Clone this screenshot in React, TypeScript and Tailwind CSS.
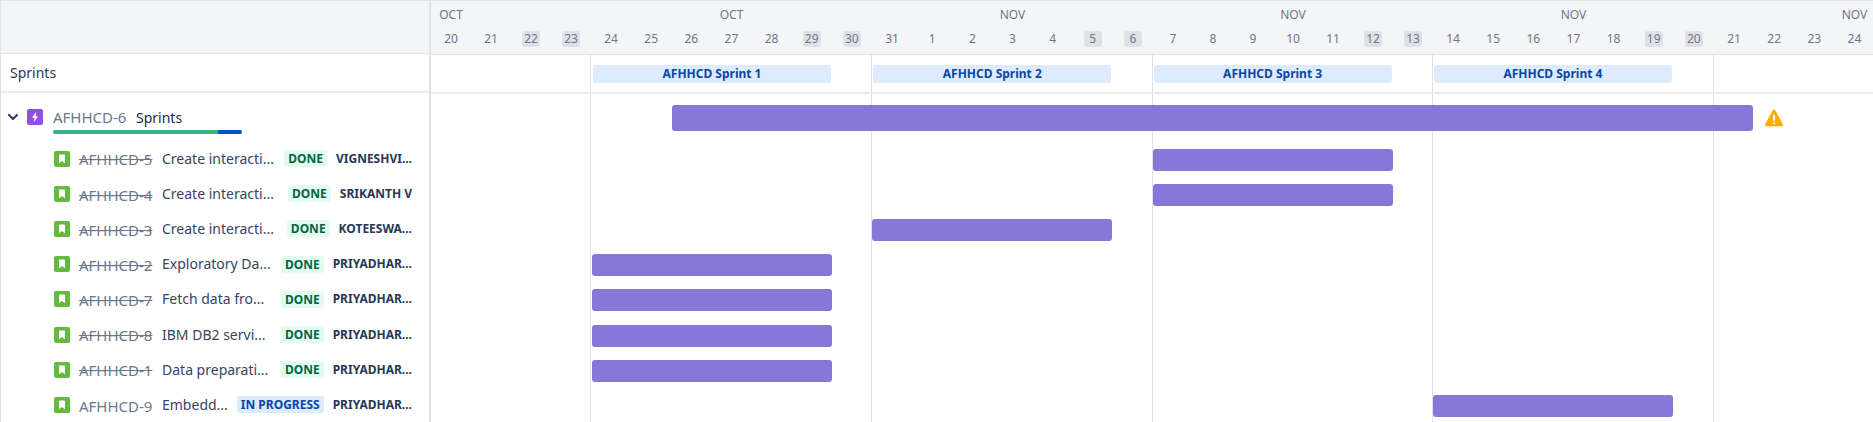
import React from 'react';

const weeks = [
  { month: 'OCT', w: 'w-[160px]', label: 'w-[40px]', days: [['20'], ['21'], ['22', 1], ['23', 1]] },
  { month: 'OCT', w: 'w-[281px]', label: 'w-full', days: [['24'], ['25'], ['26'], ['27'], ['28'], ['29', 1], ['30', 1]] },
  { month: 'NOV', w: 'w-[281px]', label: 'w-full', days: [['31'], ['1'], ['2'], ['3'], ['4'], ['5', 1], ['6', 1]] },
  { month: 'NOV', w: 'w-[280px]', label: 'w-full', days: [['7'], ['8'], ['9'], ['10'], ['11'], ['12', 1], ['13', 1]] },
  { month: 'NOV', w: 'w-[281px]', label: 'w-full', days: [['14'], ['15'], ['16'], ['17'], ['18'], ['19', 1], ['20', 1]] },
  { month: 'NOV', w: 'w-[281px]', label: 'w-full', days: [['21'], ['22'], ['23'], ['24']] },
] as const;

const sprints = [
  { name: 'AFHHCD Sprint 1', ml: 'ml-[162px]' },
  { name: 'AFHHCD Sprint 2', ml: 'ml-[42.3px]' },
  { name: 'AFHHCD Sprint 3', ml: 'ml-[42.3px]' },
  { name: 'AFHHCD Sprint 4', ml: 'ml-[42.3px]' },
];

const tasks = [
  { id: 'AFHHCD-5', title: 'Create interacti...', status: 'DONE', who: 'VIGNESHVI...', bar: 'ml-[722px]', done: true },
  { id: 'AFHHCD-4', title: 'Create interacti...', status: 'DONE', who: 'SRIKANTH V', bar: 'ml-[722px]', done: true },
  { id: 'AFHHCD-3', title: 'Create interacti...', status: 'DONE', who: 'KOTEESWA...', bar: 'ml-[441px]', done: true },
  { id: 'AFHHCD-2', title: 'Exploratory Da...', status: 'DONE', who: 'PRIYADHAR...', bar: 'ml-[161px]', done: true },
  { id: 'AFHHCD-7', title: 'Fetch data fro...', status: 'DONE', who: 'PRIYADHAR...', bar: 'ml-[161px]', done: true },
  { id: 'AFHHCD-8', title: 'IBM DB2 servi...', status: 'DONE', who: 'PRIYADHAR...', bar: 'ml-[161px]', done: true },
  { id: 'AFHHCD-1', title: 'Data preparati...', status: 'DONE', who: 'PRIYADHAR...', bar: 'ml-[161px]', done: true },
  { id: 'AFHHCD-9', title: 'Embedd...', status: 'IN PROGRESS', who: 'PRIYADHAR...', bar: 'ml-[1002px]', done: false },
];

const lines = ['left-[159px]', 'left-[440px]', 'left-[721px]', 'left-[1001px]', 'left-[1282px]'];

function StoryIcon() {
  return (
    <svg width="16" height="16" viewBox="0 0 16 16" className="shrink-0">
      <rect width="16" height="16" rx="2" fill="#63ba3c" />
      <path d="M5 4.2C5 3.8 5.3 3.5 5.7 3.5h4.6c.4 0 .7.3.7.7v8L8 10l-3 2.2z" fill="#fff" />
    </svg>
  );
}

function EpicIcon() {
  return (
    <svg width="16" height="16" viewBox="0 0 16 16" className="shrink-0">
      <rect width="16" height="16" rx="2" fill="#904ee2" />
      <path d="M8.9 3.2 5.2 8.4c-.1.2 0 .4.2.4h2.2l-.6 3.900c0 .2.2.3.3.1l3.600-5.200c.1-.2 0-.4-.2-.4H8.500l.7-3.900c0-.2-.2-.3-.3-.1z" fill="#fff" />
    </svg>
  );
}

const App: React.FC = () => {
  return (
    <div className="h-[422px] w-[1873px] overflow-hidden bg-white font-['Noto_Sans',sans-serif] text-[#253858]">
      <div className="flex h-full border-l border-t border-[#dfe1e6]">
        {/* left pane */}
        <div className="w-[428px] shrink-0 border-r-2 border-[#dfe1e6] box-content">
          <div className="h-[53px] border-b border-[#dfe1e6] bg-[#f4f5f7]" />
          <div className="flex h-[39px] items-center border-b-2 border-[#ebecf0] pl-[9px] text-[14px]">Sprints</div>
          <div className="h-[48px]">
            <div className="flex h-[24px] items-center pt-[12px] box-content">
              <svg width="24" height="24" viewBox="0 0 24 24" className="shrink-0 text-[#344563]">
                <path d="M8 10l4 4 4-4" fill="none" stroke="currentColor" strokeWidth="2.200" strokeLinecap="round" strokeLinejoin="round" />
              </svg>
              <span className="ml-[2px]"><EpicIcon /></span>
              <span className="ml-[10px] mt-[1px] w-[74px] whitespace-nowrap text-[15px] text-[#6b778c]">AFHHCD-6</span>
              <span className="ml-[9px] text-[14px] text-[#172b4d]">Sprints</span>
            </div>
            <div className="ml-[52px] mt-[1px] flex h-[4px] w-[189px] overflow-hidden rounded-full">
              <div className="w-[165px] bg-[#36b37e]" />
              <div className="flex-1 bg-[#0052cc]" />
            </div>
          </div>
          {tasks.map(t => (
            <div key={t.id} className="flex h-[35.2px] items-center pl-[53px] pr-[17px] text-[14px]">
              <StoryIcon />
              <span className={`ml-[9px] mt-[2px] w-[75px] shrink-0 whitespace-nowrap text-[15px] text-[#6b778c] ${t.done ? 'line-through' : ''}`}>{t.id}</span>
              <span className="mb-[1px] ml-[8px] min-w-0 flex-1 truncate text-[#344563]">{t.title}</span>
              <span className={`shrink-0 rounded-[3px] px-[4px] text-[12px] font-bold leading-[17px] ${t.done ? 'bg-[#e3fcef] text-[#006644]' : 'bg-[#deebff] text-[#0747a6]'}`}>{t.status}</span>
              <span className="ml-[9px] shrink-0 whitespace-nowrap text-[12px] font-bold text-[#253858]">{t.who}</span>
            </div>
          ))}
        </div>

        {/* timeline */}
        <div className="relative min-w-0 flex-1 overflow-hidden">
          {lines.map(l => (
            <div key={l} className={`absolute bottom-0 top-0 w-px bg-[#dfe1e6] ${l}`} />
          ))}
          <div className="relative flex h-[53px] border-b border-[#dfe1e6] bg-[#f4f5f7] text-[12px] text-[#6b778c] box-content">
            {weeks.map((wk, i) => (
              <div key={i} className={`shrink-0 pt-[6px] ${wk.w}`}>
                <div className={`text-center leading-[16px] ${wk.label}`}>{wk.month}</div>
                <div className="mt-[8px] flex">
                  {wk.days.map(([d, off]) => (
                    <div key={d} className="flex w-[40.14px] justify-center">
                      <span className={`flex h-[16px] w-[18px] items-center justify-center rounded-[3px] ${off ? 'bg-[#dfe1e6]' : ''}`}>{d}</span>
                    </div>
                  ))}
                </div>
              </div>
            ))}
          </div>
          <div className="relative flex h-[39px] items-center border-b-2 border-[#ebecf0]">
            {sprints.map(s => (
              <div key={s.name} className={`flex h-[18px] w-[238px] shrink-0 items-center justify-center rounded-[3px] bg-[#deebff] text-[12px] font-bold text-[#0747a6] ${s.ml}`}>{s.name}</div>
            ))}
          </div>
          <div className="relative flex h-[48px] items-start pt-[11px]">
            <div className="ml-[241px] h-[26px] w-[1081px] rounded-[3px] bg-[#8777d9]" />
            <svg width="20" height="20" viewBox="0 0 20 20" className="ml-[11px] mt-[3px] shrink-0">
              <path d="M8.6 2.400 1.200 16.200c-.5 1 .2 2.100 1.300 2.100h15c1.100 0 1.800-1.100 1.300-2.100L11.400 2.400c-.6-1.100-2.200-1.100-2.800 0z" fill="#ffab00" />
              <rect x="9" y="6.500" width="2" height="6.500" rx="1" fill="#fff" />
              <circle cx="10" cy="15.300" r="1.100" fill="#fff" />
            </svg>
          </div>
          {tasks.map(t => (
            <div key={t.id} className="relative flex h-[35.2px] items-center">
              <div className={`h-[22px] w-[240px] rounded-[3px] bg-[#8777d9] ${t.bar}`} />
            </div>
          ))}
        </div>
      </div>
    </div>
  );
};

export default App;
